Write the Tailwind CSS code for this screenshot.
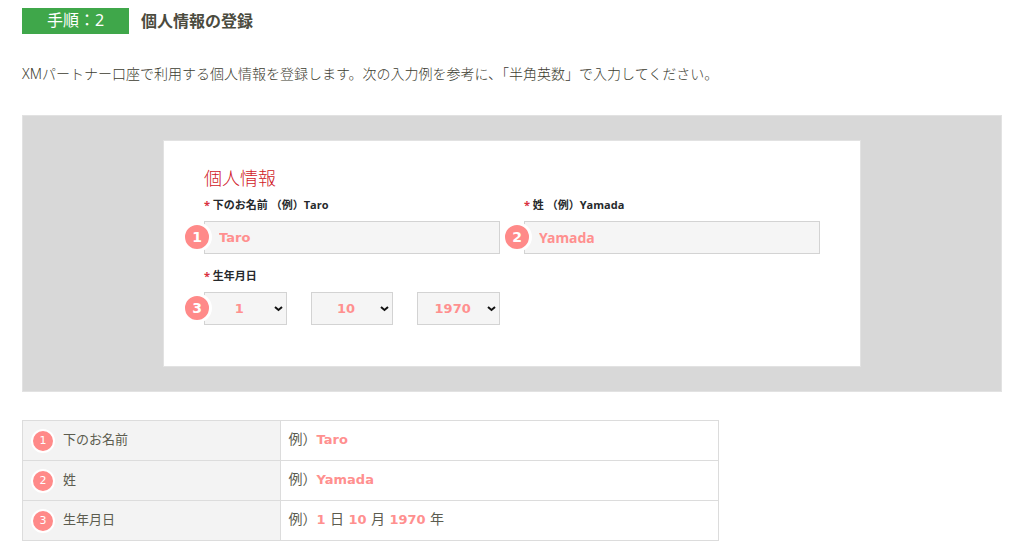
<!DOCTYPE html>
<html lang="ja">
<head>
<meta charset="utf-8">
<meta name="viewport" content="width=device-width, initial-scale=1">
<title>個人情報の登録</title>
<script src="https://cdn.jsdelivr.net/npm/@tailwindcss/browser@4"></script>
</head>
<body class="bg-white px-[22px] pt-2 pb-2 font-['DejaVu_Sans','Noto_Sans_CJK_JP',sans-serif] text-[14px] text-[#5c5c4f]">
<header class="flex items-start gap-3">
  <span class="w-[107px] bg-[#3fa74a] pb-0.5 text-center font-['Noto_Sans','Noto_Sans_CJK_JP',sans-serif] text-[16px] leading-6 text-white">手順：2</span>
  <h1 class="font-['Noto_Sans_CJK_JP',sans-serif] text-[16px] leading-6 font-bold text-[#4b4b3e]">個人情報の登録</h1>
</header>
<p class="mt-7 font-['Noto_Sans','Noto_Sans_CJK_JP',sans-serif] leading-6 font-light text-[#3c3c30]">XMパートナー口座で利用する個人情報を登録します。次の入力例を参考に、「半角英数」で入力してください。</p>

<main>
  <section class="mt-[29px] border border-[#e2e2e2] bg-[#d8d8d8] py-6">
    <form class="mx-auto w-full max-w-[698px] border border-[#e2e2e2] bg-white px-10 pt-6 pb-[41px] font-['Open_Sans','Noto_Sans_CJK_JP',sans-serif]">
      <h2 class="font-['Noto_Sans_CJK_JP',sans-serif] text-[18px] leading-6 font-light text-[#d01828]">個人情報</h2>
      <div class="mt-1.5 grid grid-cols-2 gap-x-6 gap-y-3">
        <div>
          <label for="first" class="block text-[11px] leading-5 font-bold text-[#26292c]"><span class="text-[#d9303e]">*</span> 下のお名前 （例）Taro</label>
          <div class="relative mt-1.5">
            <input id="first" type="text" value="Taro" class="block h-[33px] w-full border border-[#d3d3d3] bg-[#f5f5f5] px-[14px] font-['DejaVu_Sans',sans-serif] text-[13px] font-bold text-[#ff908f] outline-none">
            <span class="absolute top-[1px] -left-[22px] size-[30px] rounded-full border-[3px] border-white bg-[#ff8a89] text-center font-['DejaVu_Sans',sans-serif] text-[14px] leading-6 font-bold text-white">1</span>
          </div>
        </div>
        <div>
          <label for="last" class="block text-[11px] leading-5 font-bold text-[#26292c]"><span class="text-[#d9303e]">*</span> 姓 （例）Yamada</label>
          <div class="relative mt-1.5">
            <input id="last" type="text" value="Yamada" class="block h-[33px] w-full border border-[#d3d3d3] bg-[#f5f5f5] px-[14px] font-['Noto_Sans',sans-serif] text-[14px] font-bold text-[#ff908f] outline-none">
            <span class="absolute top-[1px] -left-[22px] size-[30px] rounded-full border-[3px] border-white bg-[#ff8a89] text-center font-['DejaVu_Sans',sans-serif] text-[14px] leading-6 font-bold text-white">2</span>
          </div>
        </div>
        <fieldset>
          <legend class="block text-[11px] leading-5 font-bold text-[#26292c]"><span class="text-[#d9303e]">*</span> 生年月日</legend>
          <div class="relative mt-1.5 grid grid-cols-3 gap-6">
            <div class="relative">
              <select aria-label="日" class="block h-[33px] w-full appearance-none border border-[#d3d3d3] bg-[#f5f5f5] pr-3 text-center font-['DejaVu_Sans',sans-serif] text-[13px] font-bold text-[#ff908f]"><option>1</option></select>
              <svg class="pointer-events-none absolute top-[14px] right-1 h-[6px] w-[9px]" viewBox="0 0 9 6" fill="none" stroke="#111" stroke-width="2"><path d="M1 1l3.5 3L8 1"/></svg>
            </div>
            <div class="relative">
              <select aria-label="月" class="block h-[33px] w-full appearance-none border border-[#d3d3d3] bg-[#f5f5f5] pr-3 text-center font-['DejaVu_Sans',sans-serif] text-[13px] font-bold text-[#ff908f]"><option>10</option></select>
              <svg class="pointer-events-none absolute top-[14px] right-1 h-[6px] w-[9px]" viewBox="0 0 9 6" fill="none" stroke="#111" stroke-width="2"><path d="M1 1l3.5 3L8 1"/></svg>
            </div>
            <div class="relative">
              <select aria-label="年" class="block h-[33px] w-full appearance-none border border-[#d3d3d3] bg-[#f5f5f5] pr-3 text-center font-['DejaVu_Sans',sans-serif] text-[13px] font-bold text-[#ff908f]"><option>1970</option></select>
              <svg class="pointer-events-none absolute top-[14px] right-1 h-[6px] w-[9px]" viewBox="0 0 9 6" fill="none" stroke="#111" stroke-width="2"><path d="M1 1l3.5 3L8 1"/></svg>
            </div>
            <span class="absolute top-[1px] -left-[22px] size-[30px] rounded-full border-[3px] border-white bg-[#ff8a89] text-center font-['DejaVu_Sans',sans-serif] text-[14px] leading-6 font-bold text-white">3</span>
          </div>
        </fieldset>
      </div>
    </form>
  </section>

  <table class="mt-7 w-full max-w-[697px] table-fixed border-collapse text-left">
    <colgroup><col class="w-[37%]"><col></colgroup>
    <tbody>
      <tr class="h-10">
        <th scope="row" class="border border-[#dcdcdc] bg-[#f3f3f3] px-2 py-0 font-normal"><div class="flex items-center gap-2"><span class="size-6 rounded-full border-2 border-white bg-[#ff8a89] text-center text-[11px] leading-5 text-white">1</span><span class="pb-0.5 text-[13px]">下のお名前</span></div></th>
        <td class="border border-[#dcdcdc] px-2 pt-0 pb-0.5">例）<b class="text-[13px] text-[#ff908f]">Taro</b></td>
      </tr>
      <tr class="h-10">
        <th scope="row" class="border border-[#dcdcdc] bg-[#f3f3f3] px-2 py-0 font-normal"><div class="flex items-center gap-2"><span class="size-6 rounded-full border-2 border-white bg-[#ff8a89] text-center text-[11px] leading-5 text-white">2</span><span class="pb-0.5 text-[13px]">姓</span></div></th>
        <td class="border border-[#dcdcdc] px-2 pt-0 pb-0.5">例）<b class="text-[13px] text-[#ff908f]">Yamada</b></td>
      </tr>
      <tr class="h-10">
        <th scope="row" class="border border-[#dcdcdc] bg-[#f3f3f3] px-2 py-0 font-normal"><div class="flex items-center gap-2"><span class="size-6 rounded-full border-2 border-white bg-[#ff8a89] text-center text-[11px] leading-5 text-white">3</span><span class="pb-0.5 text-[13px]">生年月日</span></div></th>
        <td class="border border-[#dcdcdc] px-2 pt-0 pb-0.5">例）<b class="text-[13px] text-[#ff908f]">1</b> 日 <b class="text-[13px] text-[#ff908f]">10</b> 月 <b class="text-[13px] text-[#ff908f]">1970</b> 年</td>
      </tr>
    </tbody>
  </table>
</main>
</body>
</html>
